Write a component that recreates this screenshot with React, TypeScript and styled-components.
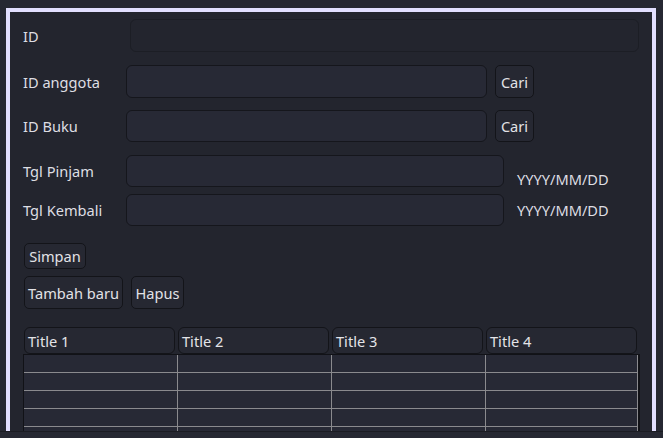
import React from "react";
import styled, { createGlobalStyle } from "styled-components";

const GlobalStyle = createGlobalStyle`
  html, body {
    margin: 0;
    padding: 0;
    background: #262832;
  }
  * { box-sizing: border-box; }
`;

const Page = styled.div`
  height: 432px;
  padding: 8px 7px 0 6px;
  border-bottom: 1px solid #1b1c22;
  font-family: "Noto Sans", "Open Sans", sans-serif;
  font-size: 14.6px;
  color: #dedee3;
`;

const Window = styled.div`
  width: 650px;
  height: 423px;
  border: 4px solid #e2dfff;
  border-bottom: none;
  background: #23252e;
  overflow: hidden;
  padding: 7px 13px 0 13px;
  display: flex;
  flex-direction: column;
`;

const Row = styled.div<{ $h: number; $top: number }>`
  display: flex;
  align-items: center;
  height: ${(p) => p.$h}px;
  margin-top: ${(p) => p.$top}px;
  flex-shrink: 0;
`;

const Label = styled.div<{ $w: number }>`
  width: ${(p) => p.$w}px;
  flex-shrink: 0;
  line-height: 18px;
`;

const Field = styled.div<{ $w?: number; $muted?: boolean }>`
  height: 100%;
  ${(p) => (p.$w ? `width: ${p.$w}px;` : "flex: 1;")}
  background: ${(p) => (p.$muted ? "#23252e" : "#272935")};
  border: 1px solid ${(p) => (p.$muted ? "#1c1e25" : "#15161c")};
  border-radius: 6px;
`;

const Spacer = styled.div`
  width: 8px;
  flex-shrink: 0;
`;

const Button = styled.button<{ $w: number }>`
  width: ${(p) => p.$w}px;
  height: 100%;
  padding: 0;
  background: #262832;
  border: 1px solid #131419;
  border-radius: 5px;
  color: #e2e2e6;
  font-family: inherit;
  font-size: 14.6px;
  text-align: center;
  flex-shrink: 0;
`;

const Hint = styled.div<{ $shift: number }>`
  margin-left: 13px;
  line-height: 18px;
  transform: translateY(${(p) => p.$shift}px);
`;

const ButtonRow = styled(Row)`
  padding-left: 1px;
  gap: 8px;
`;

const Table = styled.div`
  margin-top: 18px;
  display: flex;
  flex-direction: column;
  flex-shrink: 0;
`;

const HeaderRow = styled.div`
  display: flex;
  height: 27px;
  padding-left: 1px;
  gap: 3px;
`;

const HeaderCell = styled.div<{ $w: number }>`
  width: ${(p) => p.$w}px;
  height: 100%;
  background: #262832;
  border: 1px solid #131419;
  border-radius: 6px;
  padding-left: 3px;
  display: flex;
  align-items: center;
  color: #e4e4e8;
`;

const Body = styled.div`
  width: 617px;
  height: 120px;
  border: 1px solid #111217;
  border-right-width: 2px;
  background: #272935;
  display: grid;
  grid-template-columns: 154px 154px 154px 152px;
  grid-auto-rows: 18px;
`;

const Cell = styled.div`
  border-right: 1px solid #8a8a8e;
  border-bottom: 1px solid #8a8a8e;
`;

export default function App() {
  const headers = [
    { t: "Title 1", w: 151 },
    { t: "Title 2", w: 151 },
    { t: "Title 3", w: 151 },
    { t: "Title 4", w: 151 },
  ];
  return (
    <>
      <GlobalStyle />
      <Page>
        <Window>
          <Row $h={33} $top={0}>
            <Label $w={107}>ID</Label>
            <Field $muted />
          </Row>
          <Row $h={33} $top={13}>
            <Label $w={103}>ID anggota</Label>
            <Field $w={361} />
            <Spacer />
            <Button $w={39}>Cari</Button>
          </Row>
          <Row $h={32} $top={12}>
            <Label $w={103}>ID Buku</Label>
            <Field $w={361} />
            <Spacer />
            <Button $w={39}>Cari</Button>
          </Row>
          <Row $h={32} $top={13}>
            <Label $w={103}>Tgl Pinjam</Label>
            <Field $w={378} />
            <Hint $shift={8}>YYYY/MM/DD</Hint>
          </Row>
          <Row $h={32} $top={7}>
            <Label $w={103}>Tgl Kembali</Label>
            <Field $w={378} />
            <Hint $shift={0}>YYYY/MM/DD</Hint>
          </Row>
          <ButtonRow $h={26} $top={17}>
            <Button $w={62}>Simpan</Button>
          </ButtonRow>
          <ButtonRow $h={33} $top={7}>
            <Button $w={99}>Tambah baru</Button>
            <Button $w={53}>Hapus</Button>
          </ButtonRow>
          <Table>
            <HeaderRow>
              {headers.map((h) => (
                <HeaderCell key={h.t} $w={h.w}>
                  {h.t}
                </HeaderCell>
              ))}
            </HeaderRow>
            <Body>
              {Array.from({ length: 24 }).map((_, i) => (
                <Cell key={i} />
              ))}
            </Body>
          </Table>
        </Window>
      </Page>
    </>
  );
}
